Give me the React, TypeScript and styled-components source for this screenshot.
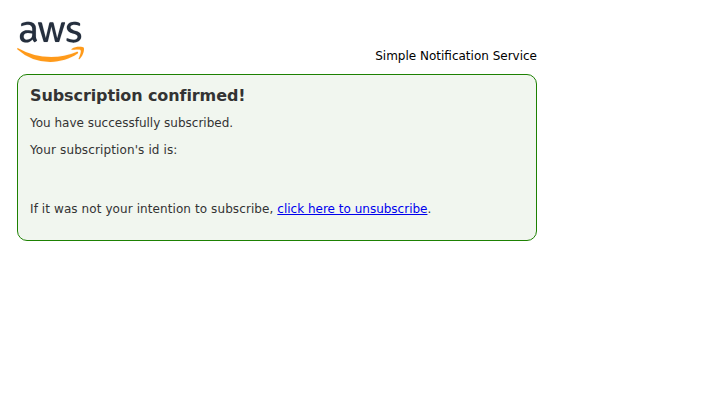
import React from 'react';
import styled, { createGlobalStyle } from 'styled-components';
import { FaAws } from 'react-icons/fa';

const GlobalStyle = createGlobalStyle`
  body {
    margin: 0;
    background: #fff;
    color: #000;
    font: 12px/15px Verdana, 'DejaVu Sans', sans-serif;
  }
`;

const Page = styled.main`
  box-sizing: border-box;
  width: 537px;
  padding: 22px 0 0 17px;
`;

const Header = styled.header`
  display: flex;
  align-items: flex-end;
  justify-content: space-between;
  height: 42px;
  margin-bottom: 10px;
`;

const Logo = styled.div`
  display: flex;
  align-items: center;
  width: 67px;
  height: 40px;
  align-self: flex-start;

  svg {
    flex: none;
    width: 67px;
    height: 53.6px;
  }

  path {
    fill: url(#aws-tones);
    stroke: url(#aws-tones);
    stroke-width: 1px;
  }
`;

const Tones = styled.svg`
  && {
    width: 0;
    height: 0;
  }
`;

const ServiceName = styled.span`
  white-space: nowrap;
`;

const Panel = styled.section`
  box-sizing: border-box;
  height: 167px;
  padding: 11px 12px 10px;
  border: 1px solid #1d8102;
  border-radius: 10px;
  background: #f1f6ef;
  color: #333;
`;

const Title = styled.h1`
  margin: 0 0 10px;
  font-size: 16px;
  line-height: 20px;
  letter-spacing: -0.1px;
`;

const Line = styled.p<{ $gap?: number; $tracking?: number }>`
  margin: 0 0 ${({ $gap = 0 }) => $gap}px;
  letter-spacing: ${({ $tracking = 0 }) => $tracking}px;
  white-space: nowrap;
`;

const Link = styled.a`
  color: #0000ee;
  letter-spacing: 0;
  text-decoration: underline;
`;

export default function App() {
  return (
    <>
      <GlobalStyle />
      <Page>
        <Header>
          <Logo>
            <Tones aria-hidden="true">
              <linearGradient id="aws-tones" x1="0" y1="0" x2="0" y2="1">
                <stop offset="0.58" stopColor="#252f3e" />
                <stop offset="0.58" stopColor="#ff9a1a" />
              </linearGradient>
            </Tones>
            <FaAws aria-label="AWS" />
          </Logo>
          <ServiceName>Simple Notification Service</ServiceName>
        </Header>
        <Panel>
          <Title>Subscription confirmed!</Title>
          <Line $gap={12}>You have successfully subscribed.</Line>
          <Line $gap={44} $tracking={0.12}>Your subscription's id is:</Line>
          <Line $tracking={0.09}>
            If it was not your intention to subscribe,{' '}
            <Link href="#unsubscribe">click here to unsubscribe</Link>.
          </Line>
        </Panel>
      </Page>
    </>
  );
}
